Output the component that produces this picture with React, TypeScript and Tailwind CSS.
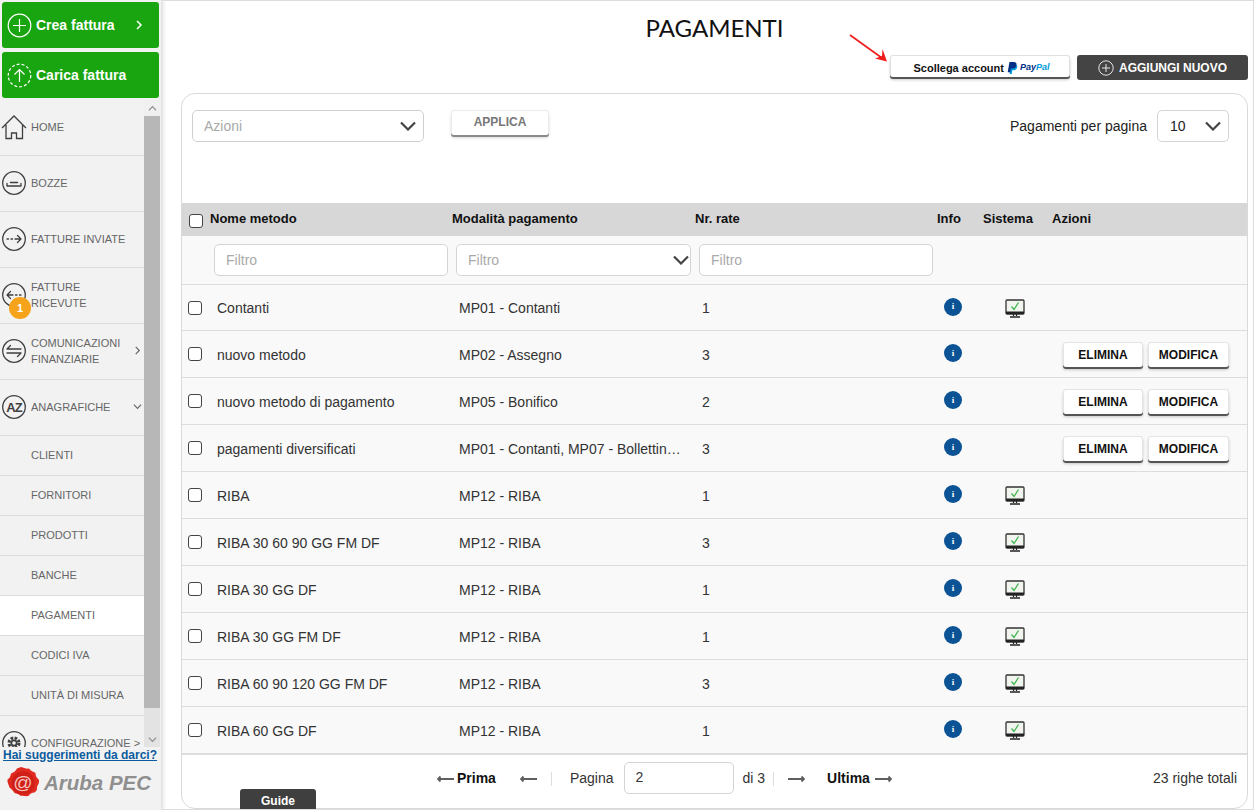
import React from "react";

const G = "#3f3f3f";

function Circle({ children }: { children?: React.ReactNode }) {
  return (
    <svg width="26" height="26" viewBox="0 0 26 26" fill="none" stroke={G} strokeWidth="1.3" strokeLinecap="round" strokeLinejoin="round" className="shrink-0">
      <circle cx="13" cy="13" r="11.3" />
      {children}
    </svg>
  );
}

const icons: Record<string, React.ReactNode> = {
  home: (
    <svg width="26" height="26" viewBox="0 0 26 26" fill="none" stroke={G} strokeWidth="1.3" strokeLinejoin="miter" className="shrink-0">
      <path d="M1 14 13 2l12 12M5 11v13.500h5.500v-5.500h5v5.500H21.500V11" />
    </svg>
  ),
  bozze: (
    <Circle>
      <path d="M6 13.500v2.500h14v-2.500" />
      <path d="M9.500 12.500h7" strokeWidth="1.500" />
    </Circle>
  ),
  inviate: (
    <Circle>
      <path d="M6 13h1.500M10 13h1.500M14 13h6M16.500 9.500 20 13l-3.500 3.500" />
    </Circle>
  ),
  ricevute: (
    <Circle>
      <path d="M20 13h-1.500M16 13h-1.500M12 13H6M9.500 9.500 6 13l3.500 3.500" />
    </Circle>
  ),
  comunicazioni: (
    <Circle>
      <path d="M6 11h14M9.500 7.500 6 11M6 15h14M16.500 18.500 20 15" />
    </Circle>
  ),
  az: (
    <svg width="26" height="26" viewBox="0 0 26 26" fill="none" className="shrink-0">
      <circle cx="13" cy="13" r="11.3" stroke={G} strokeWidth="1.3" />
      <text x="13" y="18" textAnchor="middle" fontSize="13" fontWeight="700" fill={G} fontFamily="'Liberation Sans', sans-serif" letterSpacing="-0.8">AZ</text>
    </svg>
  ),
  config: (
    <Circle>
      <circle cx="13" cy="13" r="5" stroke={G} strokeWidth="3" strokeDasharray="2.600 1.320" strokeLinecap="butt" />
      <circle cx="13" cy="13" r="3.600" fill={G} stroke="none" />
      <circle cx="13" cy="13" r="1.800" fill="#f2f2f2" stroke="none" />
    </Circle>
  ),
};

function Chevron({ dir, size = 9, color = "#666666", sw = 1.3 }: { dir: "right" | "down" | "up"; size?: number; color?: string; sw?: number }) {
  const d = dir === "right" ? "M3 1l4 4-4 4" : dir === "down" ? "M1 3l4 4 4-4" : "M1 7l4-4 4 4";
  return (
    <svg width={size} height={size} viewBox="0 0 10 10" fill="none" stroke={color} strokeWidth={sw}>
      <path d={d} />
    </svg>
  );
}

function SelectArrow() {
  return (
    <svg width="16" height="10" viewBox="0 0 16 10" fill="none" stroke="#444444" strokeWidth="2.200" className="shrink-0">
      <path d="M1 1.500l7 7 7-7" />
    </svg>
  );
}

function MenuItem({ icon, label, chevron, badge }: { icon: string; label: React.ReactNode; chevron?: "right" | "down"; badge?: boolean }) {
  return (
    <div className="relative flex h-[56px] shrink-0 items-center border-b border-[#dcdcdc] pb-[2px] pl-px">
      {icons[icon]}
      <div className="ml-[4px] flex-1 text-[11px] leading-[16px] text-[#666666]">{label}</div>
      {chevron && (
        <div className="mr-[2px]">
          <Chevron dir={chevron} />
        </div>
      )}
      {badge && (
        <div className="absolute left-[9px] top-[29px] flex h-[22px] w-[22px] items-center justify-center rounded-full bg-[#f5a31a] text-[11px] font-bold text-white">1</div>
      )}
    </div>
  );
}

function SubItem({ label, active }: { label: string; active?: boolean }) {
  return (
    <div className={`flex h-[40px] shrink-0 items-center border-b border-[#dcdcdc] pl-[31px] text-[11px] text-[#666666] ${active ? "bg-white" : ""}`}>{label}</div>
  );
}

function Monitor() {
  return (
    <svg width="20" height="20" viewBox="0 0 20 20" fill="none">
      <rect x="1" y="1" width="18" height="14" rx="1" fill="#f1f5ee" stroke="#333333" strokeWidth="1.300" />
      <rect x="1" y="12.500" width="18" height="2.500" fill="#222222" />
      <path d="M6.500 7.500l2.500 3 4.500-7" stroke="#3cb54a" strokeWidth="1.300" />
      <path d="M8.500 15v2M11.500 15v2" stroke="#222222" strokeWidth="1.200" />
      <path d="M5 18h10" stroke="#222222" strokeWidth="1.500" />
    </svg>
  );
}

function Info() {
  return (
    <div className="flex h-[18px] w-[18px] items-center justify-center rounded-full bg-[#0b5394] text-[9px] font-bold leading-none text-white [font-family:'Liberation_Serif',serif]">i</div>
  );
}

function Check({ className = "" }: { className?: string }) {
  return <div className={`h-[14px] w-[14px] rounded-[3px] border-[1.5px] border-[#444444] bg-white ${className}`} />;
}

const rowGrid = "grid grid-cols-[28px_242px_243px_242px_46px_69px_1fr]";

const rows: [string, string, string, boolean][] = [
  ["Contanti", "MP01 - Contanti", "1", true],
  ["nuovo metodo", "MP02 - Assegno", "3", false],
  ["nuovo metodo di pagamento", "MP05 - Bonifico", "2", false],
  ["pagamenti diversificati", "MP01 - Contanti, MP07 - Bollettino postale", "3", false],
  ["RIBA", "MP12 - RIBA", "1", true],
  ["RIBA 30 60 90 GG FM DF", "MP12 - RIBA", "3", true],
  ["RIBA 30 GG DF", "MP12 - RIBA", "1", true],
  ["RIBA 30 GG FM DF", "MP12 - RIBA", "1", true],
  ["RIBA 60 90 120 GG FM DF", "MP12 - RIBA", "3", true],
  ["RIBA 60 GG DF", "MP12 - RIBA", "1", true],
];

function RowButton({ label, width }: { label: string; width: string }) {
  return (
    <button className={`h-[25px] ${width} rounded-[3px] border border-[#e4e4e4] border-b-0 bg-white text-[12px] font-bold text-[#111111] shadow-[0_2px_0_#555555,0_3px_3px_rgba(0,0,0,0.2)]`}>{label}</button>
  );
}

function Arrow({ left }: { left?: boolean }) {
  return (
    <svg width="17" height="8" viewBox="0 0 17 8" fill="none" stroke="#5f5f5f" strokeWidth="1.800" className="shrink-0">
      {left ? <path d="M17 4H1M3.500 1.500 1 4l2.500 2.500" /> : <path d="M0 4h16M13.500 1.500 16 4l-2.500 2.500" />}
    </svg>
  );
}

function PayPalMark() {
  return (
    <span className="ml-[3px] inline-flex items-center">
      <svg width="11" height="12" viewBox="0 0 10 11">
        <path d="M3.600 2.400h3.700c1.500.3 2.200 1.100 2 2.400-.3 1.800-1.500 2.800-3.300 2.800H4.800L4.300 11H2.300z" fill="#009cde" />
        <path d="M2.200 0h3.900c1.800 0 2.900 1 2.600 2.700C8.300 4.900 7 5.900 5 5.900H3.500L2.900 9.500H.6z" fill="#003087" />
      </svg>
      <span className="ml-[2px] text-[9px] font-bold italic">
        <span className="text-[#003087]">Pay</span>
        <span className="text-[#009cde]">Pal</span>
      </span>
    </span>
  );
}

function Seal() {
  return (
    <svg width="35" height="34" viewBox="0 0 35 34" className="shrink-0">
      <path d="M15 1c3 1 5 2 8 1.500 2 3 4 3 6.500 4.500 0 3 1 4.500 3.500 7 .5 3-1 4.500-2 7 .5 2.500-.5 4-2.500 5.500-3 0-4.500 1.500-6 3.500-3 .5-5-.5-7.500 0-2.500-2-4-2.500-6.500-3-1.500-2.500-3-3.500-5-5.500C2.500 18 1 16 1.500 13.500 4 12 4.500 10 5 7.500 8 6.500 10 4.500 11 2.500z" fill="#e02a20" />
      <circle cx="17" cy="17" r="11.500" fill="#cf1f17" />
      <text x="17" y="23" textAnchor="middle" fontSize="19" fontWeight="400" fill="#f6c3bd" fontFamily="'Liberation Sans', sans-serif">@</text>
    </svg>
  );
}

export default function App() {
  return (
    <div className="flex h-[810px] w-[1255px] overflow-hidden bg-white [font-family:'Liberation_Sans',Arial,sans-serif]">
      <aside className="flex h-full w-[161px] shrink-0 flex-col bg-[#f2f2f2] shadow-[2px_0_4px_rgba(0,0,0,0.15)]">
        <div className="flex flex-col gap-[4px] px-[2px] pt-[2px]">
          <div className="flex h-[46px] items-center rounded-[3px] bg-[#19a50f] pl-[5px] pr-[15px] text-[14px] font-bold text-white">
            <svg width="25" height="25" viewBox="0 0 25 25" fill="none" stroke="#ffffff" strokeWidth="1.200">
              <circle cx="12.500" cy="12.500" r="11.300" />
              <path d="M12.500 6v13M6 12.500h13" />
            </svg>
            <span className="ml-[4px] flex-1">Crea fattura</span>
            <Chevron dir="right" size={10} color="#ffffff" sw={1.500} />
          </div>
          <div className="flex h-[46px] items-center rounded-[3px] bg-[#19a50f] pl-[5px] text-[14px] font-bold text-white">
            <svg width="25" height="25" viewBox="0 0 25 25" fill="none" stroke="#ffffff" strokeWidth="1.200">
              <circle cx="12.500" cy="12.500" r="11.300" strokeDasharray="3 2" />
              <path d="M12.500 19V6.500M7.500 11.500l5-5 5 5" />
            </svg>
            <span className="ml-[4px]">Carica fattura</span>
          </div>
        </div>
        <div className="mt-[2px] flex h-[647px] overflow-hidden">
          <nav className="flex w-[144px] flex-col overflow-hidden">
            <MenuItem icon="home" label="HOME" />
            <MenuItem icon="bozze" label="BOZZE" />
            <MenuItem icon="inviate" label="FATTURE INVIATE" />
            <MenuItem icon="ricevute" label={<>FATTURE<br />RICEVUTE</>} badge />
            <MenuItem icon="comunicazioni" label={<>COMUNICAZIONI<br />FINANZIARIE</>} chevron="right" />
            <MenuItem icon="az" label="ANAGRAFICHE" chevron="down" />
            <SubItem label="CLIENTI" />
            <SubItem label="FORNITORI" />
            <SubItem label="PRODOTTI" />
            <SubItem label="BANCHE" />
            <SubItem label="PAGAMENTI" active />
            <SubItem label="CODICI IVA" />
            <SubItem label="UNITÀ DI MISURA" />
            <MenuItem icon="config" label="CONFIGURAZIONE >" />
          </nav>
          <div className="flex w-[16px] flex-col bg-[#e3e3e3]">
            <div className="flex h-[16px] items-center justify-center bg-[#f0f0f0]"><Chevron dir="up" color="#8a8a8a" /></div>
            <div className="h-[592px] bg-[#b7b7b7]" />
            <div className="flex-1" />
            <div className="flex h-[16px] items-center justify-center"><Chevron dir="down" color="#8a8a8a" /></div>
          </div>
        </div>
        <a className="mt-[1px] whitespace-nowrap pl-[3px] text-[12px] font-bold leading-[14px] text-[#0b5c9e] underline">Hai suggerimenti da darci?</a>
        <div className="mt-[4px] flex items-center pl-[6px]">
          <Seal />
          <span className="ml-[3px] text-[20.500px] font-bold italic text-[#8f8f8f]">Aruba PEC</span>
        </div>
      </aside>

      <main className="relative mr-[1px] flex h-full min-w-0 flex-1 flex-col border-y border-r border-[#dddddd] pl-[20px] pr-[5px]">
        <h1 className="h-[54px] pt-[13px] text-center text-[24px] leading-[28px] text-[#111111] [font-family:Lato,sans-serif]">PAGAMENTI</h1>
        <div className="flex h-[38px] shrink-0 items-start justify-end">
          <svg width="40" height="30" viewBox="0 0 40 30" className="-mt-[21px] mr-[1px] shrink-0 self-start overflow-visible" fill="none">
            <path d="M1 1 33 24" stroke="#ee1c1c" strokeWidth="1.600" />
            <path d="M38 27.500 26 24.500 33 22 33.500 15z" fill="#ee1c1c" />
          </svg>
          <button className="flex h-[22px] w-[180px] items-center justify-center rounded-[3px] border border-[#e0e0e0] border-b-0 bg-white pl-[3px] pt-[3px] text-[11px] font-bold text-[#111111] shadow-[0_2px_0_#555555,0_3px_3px_rgba(0,0,0,0.2)]">
            Scollega account
            <PayPalMark />
          </button>
          <button className="ml-[7px] flex h-[25px] w-[171px] items-center justify-center rounded-[3px] bg-[#444444] text-[12px] font-bold text-white">
            <svg width="16" height="16" viewBox="0 0 16 16" fill="none" stroke="#e6e6e6" strokeWidth="1" className="mr-[5px]">
              <circle cx="8" cy="8" r="7.200" />
              <path d="M8 4v8M4 8h8" />
            </svg>
            AGGIUNGI NUOVO
          </button>
        </div>

        <section className="flex min-h-0 flex-1 flex-col overflow-hidden rounded-[14px] border border-[#d9d9d9]">
          <div className="flex h-[109px] shrink-0 items-start px-[10px] pt-[16px]">
            <div className="flex h-[32px] w-[232px] items-center justify-between rounded-[5px] border border-[#cfcfcf] pl-[11px] pr-[7px] text-[14px] text-[#aaaaaa]">
              Azioni
              <SelectArrow />
            </div>
            <button className="ml-[27px] h-[25px] w-[98px] rounded-[3px] border border-[#ececec] border-b-0 bg-white pb-[2px] text-[12px] font-bold text-[#777777] shadow-[0_2px_0_#8a8a8a,0_3px_3px_rgba(0,0,0,0.15)]">APPLICA</button>
            <div className="ml-auto flex h-[32px] items-center pr-[8px] text-[14px] text-[#222222]">
              Pagamenti per pagina
              <div className="ml-[10px] flex h-[32px] w-[72px] items-center justify-between rounded-[5px] border border-[#d4d4d4] pl-[12px] pr-[7px]">
                10
                <SelectArrow />
              </div>
            </div>
          </div>

          <div className={`${rowGrid} h-[33px] shrink-0 items-center bg-[#d7d7d7] pb-[2px] text-[13px] font-bold text-[#111111]`}>
            <div className="pl-[7px] pt-[5px]"><Check className="bg-transparent" /></div>
            <div>Nome metodo</div>
            <div>Modalità pagamento</div>
            <div>Nr. rate</div>
            <div>Info</div>
            <div>Sistema</div>
            <div>Azioni</div>
          </div>

          <div className="flex h-[49px] shrink-0 items-start gap-[8px] border-b border-[#dddddd] bg-[#f9f9f9] pl-[32px] pt-[8px] text-[14px] text-[#aaaaaa]">
            <div className="flex h-[32px] w-[234px] items-center rounded-[5px] border border-[#d4d4d4] bg-white pl-[11px]">Filtro</div>
            <div className="flex h-[32px] w-[235px] items-center justify-between rounded-[5px] border border-[#d4d4d4] bg-white pl-[11px] pr-px">
              Filtro
              <SelectArrow />
            </div>
            <div className="flex h-[32px] w-[234px] items-center rounded-[5px] border border-[#d4d4d4] bg-white pl-[11px]">Filtro</div>
          </div>

          <div className="flex min-h-0 flex-1 flex-col overflow-hidden">
            {rows.map((r, i) => (
              <div key={r[0]} className={`${rowGrid} ${i === 0 ? "h-[46px]" : "h-[47px]"} shrink-0 items-center border-b border-[#dddddd] bg-[#f9f9f9] pt-[2px] text-[14px] text-[#333333]`}>
                <div className="-mt-[2px] pl-[6px]"><Check /></div>
                <div className="pl-[7px]">{r[0]}</div>
                <div className="truncate pl-[7px] pr-[10px]">{r[1]}</div>
                <div className="pl-[7px]">{r[2]}</div>
                <div className="-mt-[4px] pl-[7px]"><Info /></div>
                <div className="pl-[22px]">{r[3] && <Monitor />}</div>
                <div className="-mt-[2px]">
                  {!r[3] && (
                    <div className="flex gap-[5px] pl-[11px]">
                      <RowButton label="ELIMINA" width="w-[80px]" />
                      <RowButton label="MODIFICA" width="w-[81px]" />
                    </div>
                  )}
                </div>
              </div>
            ))}
          </div>

          <footer className="flex h-[54px] shrink-0 items-center border-t border-[#dddddd] pb-[6px] pl-[255px] pr-[10px] text-[14px] text-[#333333]">
            <Arrow left />
            <span className="ml-[3px] font-bold text-[#111111]">Prima</span>
            <span className="ml-[24px]"><Arrow left /></span>
            <span className="ml-[14px] h-[14px] w-px bg-[#dddddd]" />
            <span className="ml-[18px]">Pagina</span>
            <div className="-mt-[2px] ml-[10px] flex h-[32px] w-[110px] items-center rounded-[5px] border border-[#d4d4d4] pl-[11px]">2</div>
            <span className="ml-[9px]">di 3</span>
            <span className="ml-[8px] h-[14px] w-px bg-[#dddddd]" />
            <span className="ml-[14px]"><Arrow /></span>
            <span className="ml-[22px] font-bold text-[#111111]">Ultima</span>
            <span className="ml-[5px]"><Arrow /></span>
            <span className="ml-auto">23 righe totali</span>
          </footer>
        </section>

        <div className="absolute bottom-0 left-[79px] flex h-[20px] w-[76px] items-center justify-center rounded-t-[3px] bg-[#3f3f3f] pt-[3px] text-[12px] font-bold text-white">Guide</div>
      </main>
    </div>
  );
}
